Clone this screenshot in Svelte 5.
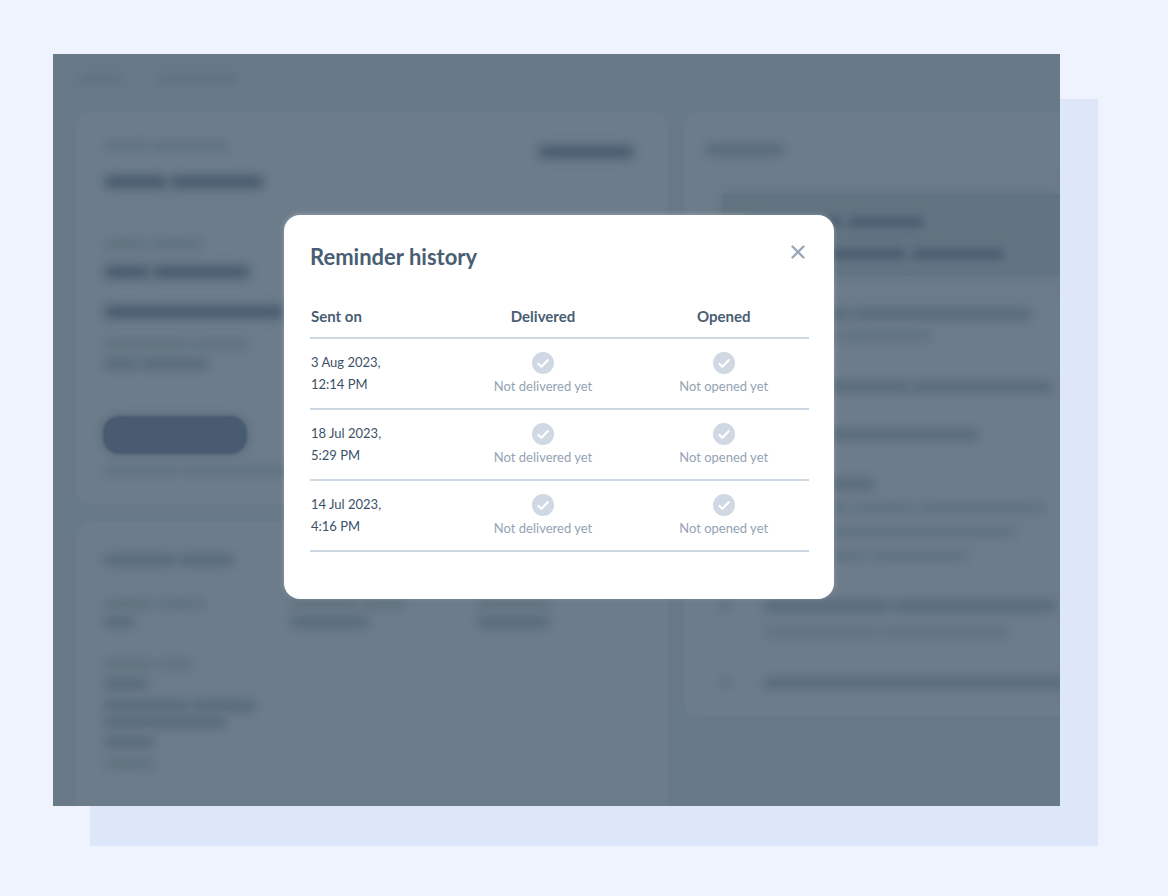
<script>
	let open = $state(true);

	const reminders = [
		{ date: '3 Aug 2023,', time: '12:14 PM' },
		{ date: '18 Jul 2023,', time: '5:29 PM' },
		{ date: '14 Jul 2023,', time: '4:16 PM' }
	];

	// Placeholder lines for the page behind the dialog. Each line is a list of
	// word widths, with the space above it and its weight.
	const summary = [
		{ gap: 18, tone: 'strong', words: [58, 88] },
		{ gap: 50, tone: 'faint', words: [38, 48] },
		{ gap: 16, tone: 'strong', words: [40, 92] },
		{ gap: 28, tone: 'strong', words: [174] },
		{ gap: 20, tone: 'faint', words: [80, 52] },
		{ gap: 8, tone: 'mid', words: [28, 62] }
	];

	const columns = [
		[{ gap: 0, tone: 'faint', words: [44, 44] }, { gap: 6, tone: 'mid', words: [24] }],
		[{ gap: 0, tone: 'faint', words: [62, 38] }, { gap: 6, tone: 'mid', words: [72] }],
		[{ gap: 0, tone: 'faint', words: [66] }, { gap: 6, tone: 'mid', words: [66] }]
	];

	const address = [
		{ gap: 30, tone: 'faint', words: [44, 32] },
		{ gap: 8, tone: 'mid', words: [38] },
		{ gap: 10, tone: 'mid', words: [80, 58] },
		{ gap: 4, tone: 'mid', words: [116] },
		{ gap: 8, tone: 'mid', words: [44] },
		{ gap: 10, tone: 'faint', words: [46] }
	];

	const activity = [
		{ gap: 28, tone: 'mid', words: [80, 174] },
		{ gap: 10, tone: 'faint', words: [70, 84] },
		{ gap: 39, tone: 'mid', words: [140, 134] },
		{ gap: 36, tone: 'mid', words: [208] },
		{ gap: 37, tone: 'mid', words: [104] },
		{ gap: 12, tone: 'faint', words: [80, 60, 120] },
		{ gap: 12, tone: 'faint', words: [246] },
		{ gap: 12, tone: 'faint', words: [100, 90] },
		{ gap: 38, tone: 'mid', words: [120, 158], dot: true },
		{ gap: 14, tone: 'faint', words: [110, 122] },
		{ gap: 39, tone: 'mid', words: [294], dot: true }
	];
</script>

{#snippet lines(rows)}
	{#each rows as row}
		<div class="line {row.tone}" class:dot={row.dot} style="margin-top: {row.gap}px">
			{#each row.words as width}
				<span style="width: {width}px"></span>
			{/each}
		</div>
	{/each}
{/snippet}

{#snippet status(text)}
	<svg class="tick" viewBox="0 0 22 22" aria-hidden="true">
		<circle cx="11" cy="11" r="11" fill="#cfd8e3" />
		<path
			d="M5.8 11.4 9.4 14.7 16.4 7.6"
			fill="none"
			stroke="#fff"
			stroke-width="2.2"
		/>
	</svg>
	<span class="status">{text}</span>
{/snippet}

<main>
	<div class="frame">
		<div class="screen">
			<div class="backdrop" aria-hidden="true">
				<div class="crumbs line faint">
					<span style="width: 40px"></span>
					<span style="width: 80px"></span>
				</div>
				<div class="columns">
					<div class="left">
						<div class="card summary">
							<div class="top">
								<div class="line faint"><span style="width: 40px"></span><span style="width: 70px"></span></div>
								<div class="line strong tag"><span style="width: 90px"></span></div>
							</div>
							{@render lines(summary)}
							<div class="pill"></div>
							{@render lines([{ gap: 11, tone: 'faint', words: [70, 110] }])}
						</div>
						<div class="card details">
							{@render lines([{ gap: 0, tone: 'mid', words: [66, 50] }])}
							<div class="trio">
								{#each columns as column}
									<div>{@render lines(column)}</div>
								{/each}
							</div>
							{@render lines(address)}
						</div>
					</div>
					<div class="card feed">
						{@render lines([{ gap: 0, tone: 'mid', words: [72] }])}
						<div class="notice">
							{@render lines([
								{ gap: 0, tone: 'strong', words: [96, 74] },
								{ gap: 20, tone: 'strong', words: [160, 90] }
							])}
						</div>
						<div class="activity">{@render lines(activity)}</div>
					</div>
				</div>
			</div>

			{#if open}
				<div class="modal" role="dialog" aria-modal="true" aria-labelledby="history-title">
					<header>
						<h1 id="history-title">Reminder history</h1>
						<button class="close" aria-label="Close" onclick={() => (open = false)}>
							<svg viewBox="0 0 16 16" aria-hidden="true">
								<path d="M2.5 2.5 13.5 13.5M13.5 2.5 2.5 13.5" />
							</svg>
						</button>
					</header>
					<table>
						<thead>
							<tr>
								<th scope="col">Sent on</th>
								<th scope="col">Delivered</th>
								<th scope="col">Opened</th>
							</tr>
						</thead>
						<tbody>
							{#each reminders as reminder}
								<tr>
									<td>{reminder.date}<br />{reminder.time}</td>
									<td>{@render status('Not delivered yet')}</td>
									<td>{@render status('Not opened yet')}</td>
								</tr>
							{/each}
						</tbody>
					</table>
				</div>
			{/if}
		</div>
	</div>
</main>

<style>
	:global(body) {
		background: #eef3fe;
		font-family: Lato, 'Liberation Sans', sans-serif;
		color: #495d73;
	}

	main {
		box-sizing: border-box;
		min-height: 100vh;
		padding: 54px 108px 90px 53px;
		display: grid;
	}

	.frame {
		position: relative;
		display: grid;
	}

	/* Offset panel peeking out from under the screen. */
	.frame::before {
		content: '';
		position: absolute;
		inset: 45px -38px -40px 37px;
		background: #dee7fa;
	}

	.screen {
		position: relative;
		display: grid;
		overflow: hidden;
		background: #687988;
	}

	.backdrop,
	.modal {
		grid-area: 1 / 1;
	}

	.backdrop {
		min-width: 0;
		padding: 19px 0 0 24px;
		display: flex;
		flex-direction: column;
	}

	.columns {
		flex: 1;
		display: grid;
		grid-template-columns: 60% minmax(0, 1fr);
		gap: 18px;
		margin-top: 28px;
	}

	.left {
		display: flex;
		flex-direction: column;
		gap: 18px;
	}

	.card {
		box-sizing: border-box;
		padding: 27px 36px 27px 30px;
		border-radius: 12px;
		background: #6d7c8b;
		box-shadow: 0 0 4px #6d7c8b;
	}

	.summary {
		height: 391px;
	}

	.details {
		flex: 1;
		padding-top: 32px;
		padding-right: 0;
		border-radius: 12px 12px 0 0;
	}

	.feed {
		align-self: start;
		padding: 31px 0 26px 24px;
		border-radius: 12px 0 0 12px;
	}

	.line {
		display: flex;
		gap: 8px;
		height: 12px;
		filter: blur(4px);
	}

	.line span {
		flex-shrink: 0;
		margin: 3px 0;
		border-radius: 6px;
		box-shadow: 0 0 0 6px #627481;
	}

	.faint span {
		background: #60727f;
		box-shadow: 0 0 0 5px #667785;
	}

	.mid span {
		background: #586a7a;
	}

	.strong span {
		margin: 2px 0;
		background: #45576c;
		box-shadow: 0 0 0 7px #607280;
	}

	.crumbs {
		gap: 36px;
		padding-left: 4px;
	}

	.top {
		display: flex;
		justify-content: space-between;
		align-items: flex-start;
	}

	.tag {
		margin-top: 6px;
	}

	.pill {
		width: 144px;
		height: 38px;
		margin: 46px 0 0 -4px;
		border-radius: 16px;
		background: #495b70;
		box-shadow: 0 0 6px 4px #607280;
		filter: blur(1px);
	}

	.dot::before {
		content: '';
		flex-shrink: 0;
		width: 12px;
		margin: 0 28px 0 -48px;
		border-radius: 50%;
		background: #60727f;
	}

	.trio {
		display: grid;
		grid-template-columns: repeat(3, 1fr);
		margin: 32px 0 0;
	}

	.notice {
		margin: 38px 0 0 14px;
		padding: 22px 0 16px 22px;
		background: #627481;
		box-shadow: 0 0 14px 2px #627481;
	}

	.activity {
		padding-top: 4px;
		padding-left: 58px;
	}

	.modal {
		position: relative;
		box-sizing: border-box;
		place-self: start center;
		width: 550px;
		max-width: 100%;
		margin: 161px 0 40px 5px;
		padding: 26px 25px 47px 26px;
		border-radius: 16px;
		background: #fff;
		box-shadow: 0 -1px 5px rgba(255, 255, 255, 0.25);
	}

	header {
		display: flex;
		justify-content: space-between;
		align-items: flex-start;
	}

	h1 {
		margin: 0;
		font-size: 22px;
		line-height: 32px;
		font-weight: 700;
	}

	.close {
		display: flex;
		padding: 3px;
		border: 0;
		background: none;
		cursor: pointer;
	}

	.close svg {
		width: 16px;
		height: 16px;
		fill: none;
		stroke: #9aa8b8;
		stroke-width: 2.4;
		stroke-linecap: round;
	}

	table {
		width: 100%;
		margin-top: 22px;
		border-collapse: separate;
		border-spacing: 0;
		table-layout: fixed;
	}

	th,
	td {
		padding: 0;
		border-bottom: 2px solid #cdd7e2;
		text-align: center;
	}

	th {
		height: 42px;
		font-size: 15px;
		font-weight: 700;
	}

	th:nth-child(1) {
		width: 27%;
	}

	th:nth-child(2) {
		width: 39%;
	}

	td {
		height: 67px;
		padding-top: 2px;
		font-size: 13px;
		line-height: 22px;
		color: #3b5067;
	}

	th:first-child,
	td:first-child {
		padding-left: 1px;
		text-align: left;
	}

	td:first-child {
		padding-top: 0;
		padding-bottom: 2px;
	}

	th:last-child,
	td:last-child {
		padding-right: 2px;
	}

	.tick {
		display: block;
		width: 22px;
		height: 22px;
		margin: 0 auto;
	}

	.status {
		display: block;
		line-height: 24px;
		color: #94a3b4;
	}
</style>
